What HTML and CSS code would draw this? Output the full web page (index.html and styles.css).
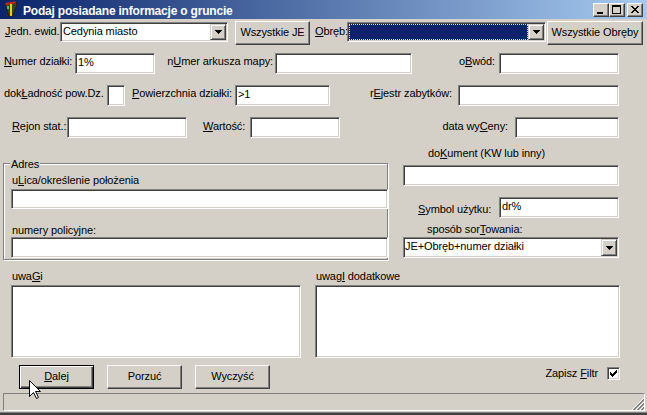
FILE: index.html
```html
<!DOCTYPE html>
<html lang="pl">
<head>
<meta charset="utf-8">
<title>Podaj posiadane informacje o gruncie</title>
<link rel="stylesheet" href="styles.css">
</head>
<body>
<div class="window">
  <div class="caption">
    <svg class="app-icon" width="16" height="16" viewBox="0 0 16 16">
      <path d="M2 3 L13 1 L14 4 L9.5 15 L6 15 Z" fill="#2c4a22" stroke="#3a1608" stroke-width="1"/>
      <path d="M2.5 3 L12.5 1.3" stroke="#c8281c" stroke-width="2"/>
      <rect x="7" y="3" width="2" height="12" fill="#e8cc20"/>
      <rect x="4" y="5" width="2" height="3" fill="#3cb8b0"/>
    </svg>
    <span class="title">Podaj posiadane informacje o gruncie</span>
    <div class="caption-btns">
      <span class="cbtn raised"><svg width="14" height="12" viewBox="0 0 14 12"><rect x="3" y="8" width="6" height="2" fill="#000"/></svg></span>
      <span class="cbtn raised"><svg width="14" height="12" viewBox="0 0 14 12"><path d="M2 1h9v2H2z M2 3h1v7H2z M10 3h1v7h-1z M2 9h9v1H2z" fill="#000"/></svg></span>
      <span class="cbtn raised close"><svg width="14" height="12" viewBox="0 0 14 12"><path transform="translate(3 2)" d="M0 0h2v1H0z M6 0h2v1H6z M1 1h2v1H1z M5 1h2v1H5z M2 2h4v1H2z M3 3h2v1H3z M2 4h4v1H2z M1 5h2v1H1z M5 5h2v1H5z M0 6h2v1H0z M6 6h2v1H6z" fill="#000"/></svg></span>
    </div>
  </div>

  <div class="client">
    <div class="row row-unit">
      <span class="lbl lbl-unit"><u>J</u>edn. ewid.</span>
      <div class="combo sunken combo-unit">
        <span class="cb-text">Cedynia miasto</span>
        <span class="cb-btn"><svg width="7" height="4" viewBox="0 0 7 4"><path d="M0 0H7V1H6V2H5V3H4V4H3V3H2V2H1V1H0Z" fill="#000"/></svg></span>
      </div>
      <button class="btn raised btn-allunits">Wszystkie JE</button>
      <span class="lbl lbl-precinct"><u>O</u>bręb:</span>
      <div class="combo sunken combo-precinct">
        <span class="cb-text selected"></span>
        <span class="cb-btn"><svg width="7" height="4" viewBox="0 0 7 4"><path d="M0 0H7V1H6V2H5V3H4V4H3V3H2V2H1V1H0Z" fill="#000"/></svg></span>
      </div>
      <button class="btn raised btn-allprecincts">Wszystkie Obręby</button>
    </div>

    <div class="row row-parcel">
      <span class="lbl lbl-parcel"><u>N</u>umer działki:</span>
      <input class="field sunken f-parcel" type="text" value="1%">
      <span class="lbl right lbl-sheet">n<u>U</u>mer arkusza mapy:</span>
      <input class="field sunken f-sheet" type="text" value="">
      <span class="lbl right lbl-district">o<u>B</u>wód:</span>
      <input class="field sunken f-district" type="text" value="">
    </div>

    <div class="row row-area">
      <span class="lbl lbl-precision">dok<u>Ł</u>adność pow.Dz.</span>
      <input class="field sunken f-precision" type="text" value="">
      <span class="lbl lbl-area"><u>P</u>owierzchnia działki:</span>
      <input class="field sunken f-area" type="text" value="&gt;1">
      <span class="lbl right lbl-register">r<u>E</u>jestr zabytków:</span>
      <input class="field sunken f-register" type="text" value="">
    </div>

    <div class="row row-stat">
      <span class="lbl lbl-region"><u>R</u>ejon stat.:</span>
      <input class="field sunken f-region" type="text" value="">
      <span class="lbl lbl-value"><u>W</u>artość:</span>
      <input class="field sunken f-value" type="text" value="">
      <span class="lbl right lbl-date">data wy<u>C</u>eny:</span>
      <input class="field sunken f-date" type="text" value="">
    </div>

    <div class="mid">
      <div class="addr">
        <span class="legend">Adres</span>
        <span class="lbl lbl-street">u<u>L</u>ica/określenie położenia</span>
        <input class="field sunken f-street" type="text" value="">
        <span class="lbl lbl-numbers">numery policyjne:</span>
        <input class="field sunken f-numbers" type="text" value="">
      </div>
      <div class="side">
        <span class="lbl lbl-doc">do<u>K</u>ument (KW lub inny)</span>
        <input class="field sunken f-doc" type="text" value="">
        <div class="symbol-row">
          <span class="lbl lbl-symbol"><u>S</u>ymbol użytku:</span>
          <input class="field sunken f-symbol" type="text" value="dr%">
        </div>
        <span class="lbl lbl-sort">sposób sor<u>T</u>owania:</span>
        <div class="combo sunken combo-sort">
          <span class="cb-text">JE+Obręb+numer działki</span>
          <span class="cb-btn"><svg width="7" height="4" viewBox="0 0 7 4"><path d="M0 0H7V1H6V2H5V3H4V4H3V3H2V2H1V1H0Z" fill="#000"/></svg></span>
        </div>
      </div>
    </div>

    <div class="notes">
      <div class="note-col note-left">
        <span class="lbl">uwa<u>G</u>i</span>
        <textarea class="memo sunken"></textarea>
      </div>
      <div class="note-col note-right">
        <span class="lbl">uwag<u>I</u> dodatkowe</span>
        <textarea class="memo sunken"></textarea>
      </div>
    </div>

    <div class="actions">
      <button class="btn default btn-next"><u>D</u>alej</button>
      <button class="btn raised btn-cancel">Porzuć</button>
      <button class="btn raised btn-clear">Wyczyść</button>
      <div class="save-filter">
        <span class="lbl">Zapisz <u>F</u>iltr</span>
        <span class="check sunken"><svg width="7" height="7" viewBox="0 0 7 7"><path d="M6 0h1v3H6z M5 1h1v3H5z M4 2h1v3H4z M3 3h1v3H3z M2 4h1v3H2z M1 3h1v3H1z M0 2h1v3H0z" fill="#000"/></svg></span>
      </div>
    </div>

    <div class="status">
      <svg class="grip" width="12" height="12" viewBox="0 0 12 12" shape-rendering="crispEdges">
        <path d="M12 0L0 12 M12 4L4 12 M12 8L8 12" stroke="#fff" stroke-width="1"/>
        <path d="M12 1L1 12 M12 2L2 12 M12 5L5 12 M12 6L6 12 M12 9L9 12 M12 10L10 12" stroke="#808080" stroke-width="1"/>
      </svg>
    </div>
  </div>

  <svg class="cursor" width="12" height="20" viewBox="0 0 12 20">
    <path d="M0.5 0.5 V16.5 L4.5 12.5 L7.5 18.5 L9.5 17.5 L6.5 11.5 H11.5 Z" fill="#fff" stroke="#000" stroke-width="1" stroke-linejoin="miter"/>
  </svg>
</div>
</body>
</html>
```
FILE: styles.css
```css
* { box-sizing: border-box; }

html, body {
  margin: 0;
  padding: 0;
}

body {
  width: 647px;
  height: 415px;
  overflow: hidden;
  background: #d4d0c8;
  font-family: "Liberation Sans", Arial, sans-serif;
  font-size: 11px;
  letter-spacing: -0.1px;
  color: #000;
}

.window {
  position: relative;
  width: 647px;
  height: 415px;
  background: #d4d0c8;
  box-shadow: inset 0 -2px 0 #404040, inset 0 -3px 0 #808080;
}

/* ---------- caption ---------- */
.caption {
  height: 19px;
  display: flex;
  align-items: flex-start;
  background: linear-gradient(to right, #0a246a, #a6caf0);
}

.app-icon {
  flex: none;
  margin: 1px 0 0 3px;
}

.title {
  margin: 3px 0 0 4px;
  color: #fff;
  font-weight: bold;
  font-size: 12px;
  line-height: 16px;
  letter-spacing: -0.2px;
  white-space: nowrap;
}

.caption-btns {
  display: flex;
  margin: 3px 4px 0 auto;
}

.cbtn {
  display: block;
  width: 16px;
  height: 14px;
}

.cbtn svg { display: block; }

.cbtn.close { margin-left: 2px; }

/* ---------- 3D borders ---------- */
.sunken {
  border: 1px solid;
  border-color: #808080 #fff #fff #808080;
  box-shadow: inset 1px 1px 0 #404040, inset -1px -1px 0 #d4d0c8;
  background: #fff;
}

.raised {
  border: 1px solid;
  border-color: #fff #404040 #404040 #fff;
  box-shadow: inset -1px -1px 0 #808080, inset 1px 1px 0 #d4d0c8;
  background: #d4d0c8;
}

/* ---------- controls ---------- */
.row {
  display: flex;
  align-items: flex-start;
}

.lbl {
  flex: none;
  line-height: 13px;
  white-space: nowrap;
}

.lbl.right { text-align: right; }

u { text-underline-offset: 1px; }

.field {
  flex: none;
  height: 21px;
  margin: 0;
  padding: 0 0 4px 2px;
  font: inherit;
  letter-spacing: inherit;
  color: #000;
  outline: none;
}

.combo {
  flex: none;
  display: flex;
  height: 20px;
  padding: 1px;
}

.cb-text {
  flex: 1;
  padding-left: 1px;
  line-height: 15px;
  white-space: nowrap;
  overflow: hidden;
}

.cb-text.selected {
  background: #0a246a;
  border: 1px dotted #f5db95;
}

.cb-btn {
  flex: none;
  width: 16px;
  display: flex;
  align-items: center;
  justify-content: center;
  background: #d4d0c8;
  border: 1px solid;
  border-color: #d4d0c8 #404040 #404040 #d4d0c8;
  box-shadow: inset 1px 1px 0 #fff, inset -1px -1px 0 #808080;
}

.cb-btn svg { display: block; }

.btn {
  flex: none;
  height: 24px;
  width: 75px;
  margin: 0;
  padding: 0 0 1px;
  font: inherit;
  letter-spacing: inherit;
  line-height: 13px;
  color: #000;
  white-space: nowrap;
}

.btn.default {
  background: #d4d0c8;
  border: 1px solid #000;
  box-shadow: inset 1px 1px 0 #fff, inset -1px -1px 0 #404040, inset -2px -2px 0 #808080;
}

/* ---------- row 1 ---------- */
.row-unit { margin-top: 2px; }
.row-unit .lbl { margin-top: 4px; }
.row-unit .combo { margin-top: 1px; }
.lbl-unit { margin-left: 5px; width: 55px; }
.combo-unit { width: 168px; }
.btn-allunits { margin-left: 7px; }
.lbl-precinct { margin-left: 5px; width: 32px; }
.combo-precinct { width: 199px; }
.btn-allprecincts { margin-left: 1px; width: 96px; }

/* ---------- row 2 ---------- */
.row-parcel { margin-top: 8px; }
.row-parcel .lbl { margin-top: 2px; }
.lbl-parcel { margin-left: 4px; width: 71px; }
.f-parcel { width: 80px; }
.lbl-sheet { width: 120px; padding-right: 2px; }
.f-sheet { width: 137px; }
.lbl-district { width: 87px; padding-right: 4px; }
.f-district { width: 120px; }

/* ---------- row 3 ---------- */
.row-area { margin-top: 11px; }
.row-area .lbl { margin-top: 2px; }
.lbl-precision { margin-left: 4px; width: 103px; }
.f-precision { width: 18px; }
.lbl-area { width: 110px; padding-left: 7px; }
.f-area { width: 95px; }
.lbl-register { width: 128px; padding-right: 6px; }
.f-register { width: 161px; }

/* ---------- row 4 ---------- */
.row-stat { margin-top: 11px; }
.row-stat .lbl { margin-top: 3px; }
.lbl-region { margin-left: 12px; width: 55px; }
.f-region { width: 120px; }
.lbl-value { width: 63px; padding-left: 16px; }
.f-value { width: 90px; }
.lbl-date { width: 175px; padding-right: 7px; }
.f-date { width: 104px; }

/* ---------- address group + side column ---------- */
.mid {
  display: flex;
  align-items: flex-start;
}

.addr {
  position: relative;
  flex: none;
  width: 385px;
  margin: 25px 0 0 3px;
  padding: 0 0 1px 7px;
  border: 1px solid #808080;
  box-shadow: 1px 1px 0 #fff, inset 1px 1px 0 #fff;
}

.legend {
  position: absolute;
  top: -6px;
  left: 6px;
  padding: 0 1px;
  line-height: 13px;
  background: #d4d0c8;
}

.addr .lbl {
  display: block;
  padding-left: 1px;
}

.lbl-street { margin-top: 10px; }
.f-street {
  display: block;
  width: 377px;
  height: 20px;
  padding-bottom: 3px;
  margin-top: 2px;
}
.lbl-numbers { margin-top: 15px; }
.f-numbers {
  display: block;
  width: 377px;
}

.side {
  flex: none;
  width: 216px;
  margin-left: 15px;
}

.lbl-doc {
  display: block;
  margin-top: 9px;
  padding-left: 25px;
}
.f-doc {
  display: block;
  width: 216px;
  margin-top: 5px;
}

.symbol-row {
  display: flex;
  align-items: flex-start;
  margin-top: 11px;
}
.lbl-symbol { width: 96px; padding-left: 15px; margin-top: 6px; }
.f-symbol { width: 120px; }

.lbl-sort {
  display: block;
  margin-top: 5px;
  padding-left: 24px;
}
.combo-sort {
  width: 216px;
  height: 21px;
  margin-top: 1px;
}
.combo-sort .cb-text { padding-left: 0; }

/* ---------- notes ---------- */
.notes {
  display: flex;
  align-items: flex-start;
  margin-top: 10px;
}

.note-col { flex: none; }
.note-col .lbl { display: block; padding-left: 1px; }
.note-left { width: 290px; margin-left: 11px; }
.note-right { width: 305px; margin-left: 14px; }

.memo {
  display: block;
  width: 100%;
  height: 73px;
  margin: 2px 0 0;
  padding: 2px;
  resize: none;
  overflow: hidden;
  font: inherit;
  outline: none;
}

/* ---------- actions ---------- */
.actions {
  display: flex;
  align-items: flex-start;
  margin: 7px 27px 0 0;
}

.btn-next { margin-left: 19px; }
.btn-cancel, .btn-clear { margin-left: 13px; }

.save-filter {
  display: flex;
  align-items: flex-start;
  margin-left: auto;
}
.save-filter .lbl { margin-top: 2px; }

.check {
  width: 13px;
  height: 13px;
  margin: 2px 0 0 9px;
  display: flex;
  align-items: center;
  justify-content: center;
}
.check svg { display: block; }

/* ---------- status bar ---------- */
.status {
  height: 18px;
  margin: 4px 2px 0 3px;
  border: 1px solid;
  border-color: #808080 #fff #fff #808080;
  display: flex;
  justify-content: flex-end;
  align-items: flex-end;
}

.grip { display: block; }

/* mouse pointer overlay */
.cursor {
  position: absolute;
  left: 29px;
  top: 380px;
}
```
